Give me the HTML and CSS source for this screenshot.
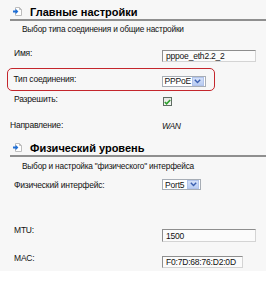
FILE: index.html
```html
<!DOCTYPE html>
<html>
<head>
<meta charset="utf-8">
<link rel="stylesheet" href="styles.css">
</head>
<body>
<div class="page">
  <div class="head head1">
    <svg class="ico" width="9" height="9" viewBox="0 0 9 9"><path d="M2.5 0.5h4l2 2v6h-6z" fill="#fff" stroke="#bdbdbd"/><path d="M6.5 0.5v2h2" fill="none" stroke="#bdbdbd"/><path d="M0 3.6h2.6v-1.8l2.8 2.7-2.8 2.7v-1.8h-2.6z" fill="#1f6fd6"/></svg>
    <span class="title">Главные настройки</span>
  </div>
  <div class="desc desc1">Выбор типа соединения и общие настройки</div>
  <div class="row r-name"><span class="lbl">Имя:</span><span class="txt w94 c-name">pppoe_eth2.2_2</span></div>
  <div class="hl">
    <div class="row r-type"><span class="lbl">Тип соединения:</span><span class="sel w44 c-type"><span class="val">PPPoE</span><span class="btn"><svg width="7" height="5" viewBox="0 0 7 5"><path d="M0.8 0.8l2.7 2.7 2.7-2.7" fill="none" stroke="#3a5fb0" stroke-width="1.4"/></svg></span></span></div>
  </div>
  <div class="row r-en"><span class="lbl">Разрешить:</span><span class="chk"><svg width="7" height="6" viewBox="0 0 7 6"><path d="M0.8 3l1.8 1.8 3.6-3.8" fill="none" stroke="#2ca02c" stroke-width="1.6"/></svg></span></div>
  <div class="row r-dir"><span class="lbl lbl0">Направление:</span><span class="wan">WAN</span></div>
  <div class="head head2">
    <svg class="ico" width="9" height="9" viewBox="0 0 9 9"><path d="M2.5 0.5h4l2 2v6h-6z" fill="#fff" stroke="#bdbdbd"/><path d="M6.5 0.5v2h2" fill="none" stroke="#bdbdbd"/><path d="M0 3.6h2.6v-1.8l2.8 2.7-2.8 2.7v-1.8h-2.6z" fill="#1f6fd6"/></svg>
    <span class="title">Физический уровень</span>
  </div>
  <div class="desc desc2">Выбор и настройка "физического" интерфейса</div>
  <div class="row r-phys"><span class="lbl">Физический интерфейс:</span><span class="sel w39 c-phys"><span class="val">Port5</span><span class="btn"><svg width="7" height="5" viewBox="0 0 7 5"><path d="M0.8 0.8l2.7 2.7 2.7-2.7" fill="none" stroke="#3a5fb0" stroke-width="1.4"/></svg></span></span></div>
  <div class="row r-mtu"><span class="lbl">MTU:</span><span class="txt w94 c-mtu">1500</span></div>
  <div class="row r-mac"><span class="lbl">MAC:</span><span class="txt w81 c-mac">F0:7D:68:76:D2:0D</span></div>
</div>
</body>
</html>
```
FILE: styles.css
```css
html, body {
  margin: 0;
  padding: 0;
  background: #ffffff;
}
body {
  font-family: "Liberation Sans", Arial, sans-serif;
  font-size: 8.5px;
  letter-spacing: -0.2px;
  color: #111;
}
.page {
  background: #f7f7f7;
  height: 271px;
  padding: 4px 0 0 10px;
  box-sizing: border-box;
  overflow: hidden;
}
.head {
  display: flex;
  align-items: center;
  height: 15px;
  border-bottom: 2px solid #8f8f8f;
  padding-left: 3px;
}
.ico {
  display: block;
  margin-right: 8px;
}
.title {
  font-weight: bold;
  font-size: 11px;
  letter-spacing: 0;
  color: #000;
}
.desc {
  padding-left: 12px;
  height: 14px;
  line-height: 14px;
  font-size: 8.3px;
}
.desc1 { margin-top: 1px; }
.desc2 { margin-top: 2px; }
.row {
  display: flex;
  align-items: flex-start;
}
.lbl {
  width: 152px;
  padding-left: 4px;
  box-sizing: border-box;
  flex: none;
  line-height: 12px;
  height: 12px;
}
.lbl0 {
  padding-left: 0;
}
.txt {
  display: flex;
  align-items: center;
  height: 12px;
  box-sizing: border-box;
  border: 1px solid;
  border-color: #8e8e8e #d4d4d4 #d4d4d4 #8e8e8e;
  background: #fbfbfb;
  padding-left: 3px;
}
.w94 { width: 94px; }
.w81 { width: 81px; }
.w44 { width: 44px; }
.w39 { width: 39px; }
.sel {
  display: flex;
  align-items: center;
  justify-content: space-between;
  height: 11px;
  box-sizing: border-box;
  border: 1px solid #a7adb5;
  background: #fff;
  padding: 0 1px 0 2px;
}
.btn {
  display: flex;
  align-items: center;
  justify-content: center;
  width: 12px;
  height: 9px;
  background: linear-gradient(#d4e0f8, #b9ccf2);
  border: 1px solid #b1c3ea;
  box-sizing: border-box;
}
.chk {
  display: flex;
  align-items: center;
  justify-content: center;
  width: 9px;
  height: 9px;
  box-sizing: border-box;
  border: 1px solid #5f6d63;
  background: linear-gradient(#e6e8e4, #f7f7f5);
  margin-left: 1px;
  margin-top: 4px;
}
.wan {
  font-style: italic;
  line-height: 12px;
  margin-top: 1px;
  letter-spacing: -0.4px;
}
.c-name { margin-top: 3px; }
.c-type { margin-top: 3px; }
.c-phys { margin-top: 0; height: 11px; }
.c-mtu { margin-top: 5px; height: 13px; }
.c-mac { margin-top: 4px; }
.r-name { margin-top: 11px; }
.hl {
  margin-top: 6px;
  margin-left: -3px;
  width: 208px;
  height: 23px;
  box-sizing: border-box;
  border: 1.5px solid #c4262c;
  border-radius: 5px;
  padding: 3.5px 0 0 1.5px;
}
.r-en { margin-top: 2px; }
.r-dir { margin-top: 13px; }
.head2 { margin-top: 8px; }
.r-phys { margin-top: 6px; }
.r-mtu { margin-top: 33px; }
.r-mac { margin-top: 10px; }
```
